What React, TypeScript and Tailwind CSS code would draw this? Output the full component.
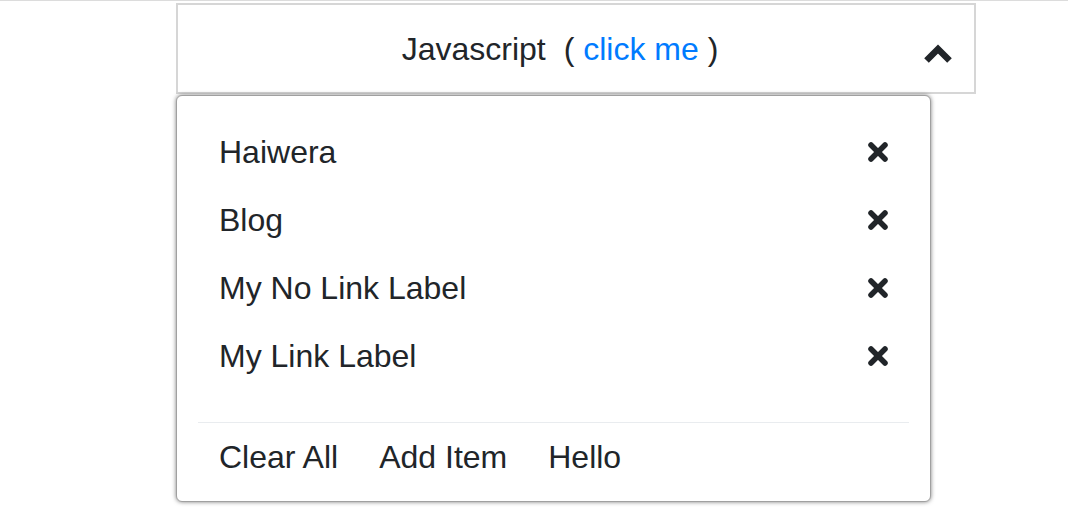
import React from "react";

const ITEMS = ["Haiwera", "Blog", "My No Link Label", "My Link Label"];
const ACTIONS = ["Clear All", "Add Item", "Hello"];

function ChevronUp() {
  return (
    <svg width="30" height="22" viewBox="0 0 30 22" className="shrink-0">
      <polyline
        points="3.5,18.5 15,7 26.5,18.5"
        fill="none"
        stroke="#212529"
        strokeWidth="6.5"
        strokeLinejoin="miter"
        strokeLinecap="butt"
      />
    </svg>
  );
}

function Times() {
  return (
    <svg width="22" height="22" viewBox="0 0 22 22" className="shrink-0">
      <g stroke="#212529" strokeWidth="5.5" strokeLinecap="round">
        <line x1="4" y1="4" x2="18" y2="18" />
        <line x1="18" y1="4" x2="4" y2="18" />
      </g>
    </svg>
  );
}

export default function App() {
  return (
    <div className="min-h-screen w-full bg-white text-[#212529] font-['Liberation_Sans',Arial,sans-serif] border-t border-[#dcdcdc]">
      <div className="relative ml-[176px] mt-[2px] w-[800px]">
        {/* header toggle */}
        <div className="h-[91px] border-2 border-[#d6d6d6] flex items-center justify-center relative">
          <div className="text-[32px] leading-none ml-[-32px] whitespace-pre">
            Javascript<span className="ml-[9px]"> ( </span>
            <span className="text-[#007bff]">click me</span> )
          </div>
          <div className="absolute right-[21px] top-[37px]">
            <ChevronUp />
          </div>
        </div>

        {/* dropdown panel */}
        <div className="absolute left-0 top-[92px] w-[755px] bg-white rounded-[6px] border border-[#a0a0a0] shadow-[0_0_4px_rgba(0,0,0,0.5)] pt-[22px] pb-[10px]">
          <ul>
            {ITEMS.map((item) => (
              <li key={item} className="h-[68px] flex items-center justify-between pl-[42px] pr-[41px]">
                <span className="text-[32px] leading-none">{item}</span>
                <Times />
              </li>
            ))}
          </ul>
          <div className="mt-[32px] mx-[21px] h-px bg-[#e9ecef]" />
          <div className="h-[68px] flex items-center gap-[41px] pl-[42px]">
            {ACTIONS.map((a) => (
              <span key={a} className="text-[32px] leading-none">{a}</span>
            ))}
          </div>
        </div>
      </div>
    </div>
  );
}
